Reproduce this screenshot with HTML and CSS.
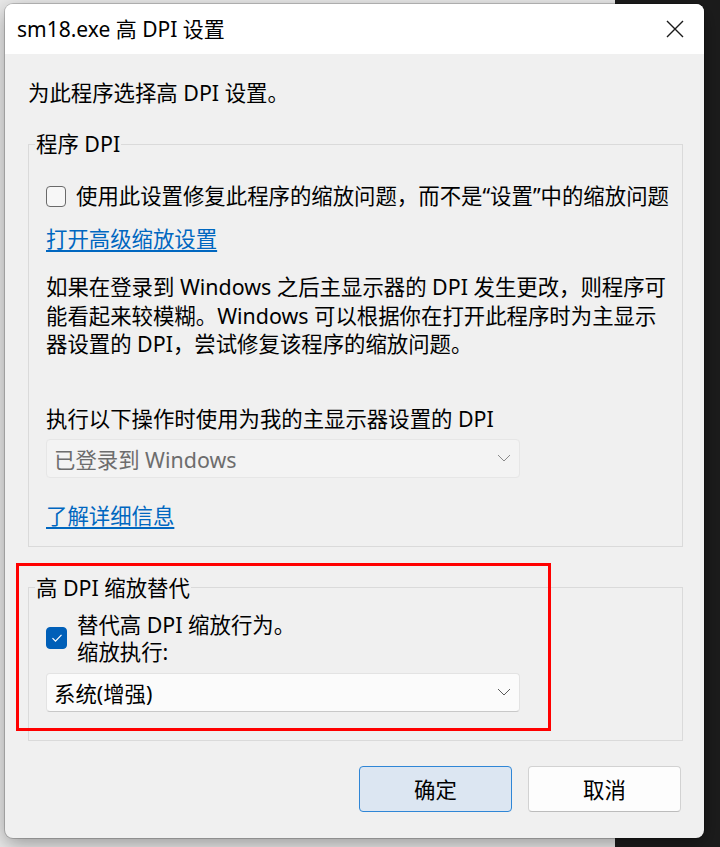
FILE: index.html
```html
<!DOCTYPE html>
<html lang="zh-CN">
<head>
<meta charset="utf-8">
<title>sm18.exe 高 DPI 设置</title>
<link rel="stylesheet" href="styles.css">
</head>
<body>
<div class="desk">
  <div class="dialog">
    <div class="titlebar">
      <span class="title">sm18.exe 高 DPI 设置</span>
      <svg class="close" width="18" height="18" viewBox="0 0 18 18"><path d="M1 1L17 17M17 1L1 17" stroke="#1a1a1a" stroke-width="1.4" fill="none"/></svg>
    </div>
    <div class="content">
      <p class="intro">为此程序选择高 DPI 设置。</p>

      <fieldset class="group group-dpi">
        <legend>程序 DPI</legend>
        <label class="check-row">
          <span class="box"></span>
          <span>使用此设置修复此程序的缩放问题，而不是“设置”中的缩放问题</span>
        </label>
        <a class="link link-adv" href="#">打开高级缩放设置</a>
        <p class="para">如果在登录到 Windows 之后主显示器的 DPI 发生更改，则程序可<br>能看起来较模糊。Windows 可以根据你在打开此程序时为主显示<br>器设置的 DPI，尝试修复该程序的缩放问题。</p>
        <p class="label-use">执行以下操作时使用为我的主显示器设置的 DPI</p>
        <div class="select disabled">
          <span>已登录到 Windows</span>
          <svg width="14" height="8" viewBox="0 0 14 8"><path d="M1 1L7 7L13 1" stroke="#8a8a8a" stroke-width="1" fill="none"/></svg>
        </div>
        <a class="link link-more" href="#">了解详细信息</a>
      </fieldset>

      <fieldset class="group group-override">
        <legend>高 DPI 缩放替代</legend>
        <label class="check-row two">
          <span class="box checked"><svg width="12" height="10" viewBox="0 0 12 10"><path d="M1.5 5.2L4.5 8.2L10.5 1.8" stroke="#fff" stroke-width="1.2" fill="none"/></svg></span>
          <span class="two-lines">替代高 DPI 缩放行为。<br>缩放执行:</span>
        </label>
        <div class="select">
          <span>系统(增强)</span>
          <svg width="14" height="8" viewBox="0 0 14 8"><path d="M1 1L7 7L13 1" stroke="#5a5a5a" stroke-width="1" fill="none"/></svg>
        </div>
      </fieldset>

      <div class="buttons">
        <button class="btn primary">确定</button>
        <button class="btn">取消</button>
      </div>
    </div>
    <div class="annotation"></div>
  </div>
</div>
</body>
</html>
```

FILE: styles.css
```css
* { box-sizing: border-box; }
html, body {
  margin: 0;
  width: 720px;
  height: 847px;
  overflow: hidden;
}
body {
  background: linear-gradient(to right, #e9e9e9 0, #e9e9e9 615px, #1c1c1c 615px);
  font-family: "Noto Sans", "Noto Sans CJK SC", sans-serif;
  font-size: 21.4px;
  color: #000;
}
.desk {
  padding: 4px 0 0 5px;
}
.dialog {
  position: relative;
  width: 699px;
  height: 834px;
  background: #f0f0f0;
  border-radius: 8px;
  overflow: hidden;
  box-shadow: 0 0 0 1px rgba(0,0,0,0.18), 0 6px 20px rgba(0,0,0,0.35);
  display: flex;
  flex-direction: column;
}
.titlebar {
  height: 50px;
  background: #fff;
  display: flex;
  align-items: center;
  justify-content: space-between;
  padding: 0 20px 0 12px;
  flex: none;
}
.title {
  font-size: 21px;
  line-height: 28px;
}
.content {
  padding: 25px 21px 0 23px;
  display: flex;
  flex-direction: column;
}
p { margin: 0; }
.intro {
  line-height: 28px;
}
.group {
  margin: 23px 0 0 0;
  border: 1px solid #dadada;
  padding: 24px 8px 16px 17px;
  min-width: 0;
  display: flex;
  flex-direction: column;
  align-items: flex-start;
}
.group legend {
  line-height: 28px;
  padding: 0 1px;
  margin-left: -11px;
}
.group-override {
  margin-top: 27px;
  padding: 9px 8px 28px 17px;
}
.check-row {
  display: flex;
  align-items: center;
  gap: 10px;
  line-height: 28px;
  white-space: nowrap;
}
.box {
  width: 20px;
  height: 21px;
  border: 1px solid #6a6a6a;
  border-radius: 4px;
  background: #f7f7f7;
  flex: none;
  display: flex;
  align-items: center;
  justify-content: center;
}
.box.checked {
  width: 21px;
  height: 22px;
  background: #005fb8;
  border-color: #005fb8;
}
.two-lines {
  line-height: 27px;
}
.link {
  color: #0067c0;
  text-decoration: underline;
  text-underline-offset: 3px;
  line-height: 28px;
}
.link-adv { margin-top: 15px; }
.para {
  margin-top: 20px;
  line-height: 28.5px;
  white-space: nowrap;
}
.label-use {
  margin-top: 46px;
  line-height: 28px;
}
.select {
  width: 474px;
  height: 39px;
  margin-top: 6px;
  border: 1px solid #e3e3e3;
  border-bottom-color: #c8c8c8;
  border-radius: 4px;
  background: #fbfbfb;
  display: flex;
  align-items: center;
  justify-content: space-between;
  padding: 0 8px 0 7px;
}
.select.disabled {
  background: #f3f3f3;
  border-color: #e6e6e6;
  color: #6d6d6d;
}
.group-override .select { margin-top: 8px; }
.link-more { margin-top: 24px; }
.buttons {
  display: flex;
  justify-content: flex-end;
  gap: 16px;
  margin-top: 25px;
  padding-right: 2px;
}
.btn {
  width: 153px;
  height: 46px;
  font: inherit;
  color: #000;
  background: #fdfdfd;
  border: 1px solid #d2d2d2;
  border-bottom-color: #bcbcbc;
  border-radius: 4px;
}
.btn.primary {
  background: #dce6f2;
  border: 1px solid #2f86d6;
}
.annotation {
  position: absolute;
  left: 11px;
  top: 559px;
  width: 535px;
  height: 168px;
  border: 3px solid #ff0000;
  pointer-events: none;
}
```
